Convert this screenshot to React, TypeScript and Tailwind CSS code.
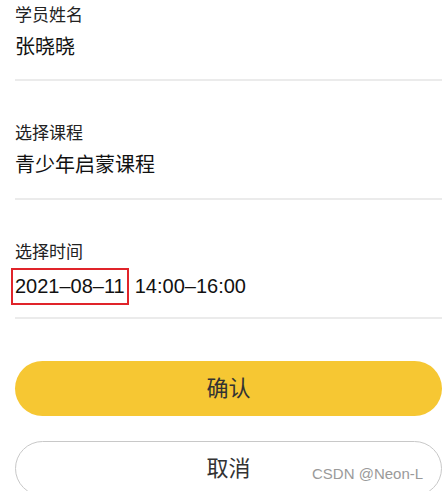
import React from 'react';

const fields = [
  { label: '学员姓名', value: '张晓晓' },
  { label: '选择课程', value: '青少年启蒙课程' },
];

export default function App() {
  return (
    <div className="relative w-[442px] h-[491px] overflow-hidden bg-white font-['Liberation_Sans','Noto_Sans_CJK_SC',sans-serif]">
      <div className="flex flex-col pl-[15px]">
        {fields.map((f, i) => (
          <div
            key={f.label}
            className={`flex flex-col border-b-2 border-[#ebebeb] ${i === 0 ? 'pt-[4px] pb-[18px]' : 'pt-[41px] pb-[19px]'}`}
          >
            <span className="text-[17px] leading-[24px] text-[#222]">{f.label}</span>
            <span className="mt-[5px] text-[20px] leading-[28px] text-[#111]">{f.value}</span>
          </div>
        ))}

        <div className="flex flex-col border-b-2 border-[#ebebeb] pt-[41px] pb-[12px]">
          <span className="text-[17px] leading-[24px] text-[#222]">选择时间</span>
          <div className="mt-[3px] flex items-center text-[20px] leading-[29px] text-[#111]">
            <span className="-ml-[4px] border-2 border-[#e0242a] px-[2px] py-[2px]">2021–08–11</span>
            <span className="ml-[6px]">14:00–16:00</span>
          </div>
        </div>

        <button className="mt-[42px] h-[55px] w-[427px] rounded-full bg-[#f6c733] text-[22px] text-[#333]">
          确认
        </button>
        <button className="mt-[25px] h-[55px] w-[427px] rounded-full border border-[#c8c8c8] bg-white text-[22px] text-[#333]">
          取消
        </button>
      </div>
      <span className="absolute left-[312px] top-[464px] text-[15px] leading-[20px] text-[#9a9a9a]">CSDN @Neon-L</span>
    </div>
  );
}
